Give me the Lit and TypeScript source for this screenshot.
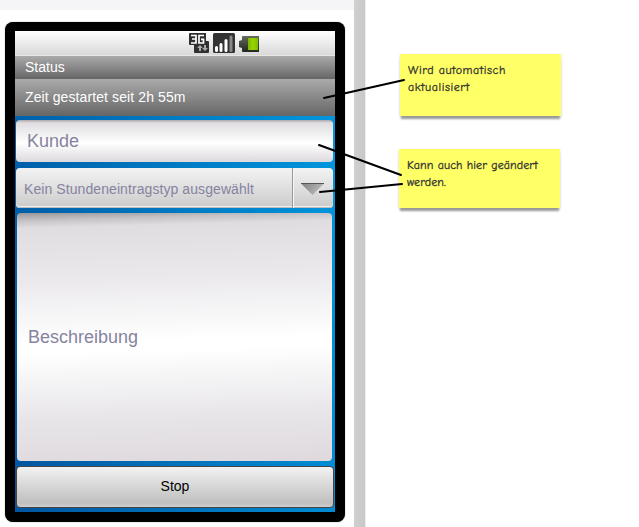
import { LitElement, html, css, svg } from "lit";
import { customElement } from "lit/decorators.js";

@customElement("status-icons")
class StatusIcons extends LitElement {
  static styles = css`
    :host { display: block; width: 74px; height: 22px; }
    svg { display: block; }
  `;
  render() {
    return html`<svg width="74" height="22" viewBox="0 0 74 22">
      <defs>
        <linearGradient id="cell" x1="0" x2="1"><stop offset="0" stop-color="#78b800"/><stop offset=".5" stop-color="#99d500"/><stop offset="1" stop-color="#7cba00"/></linearGradient>
        <linearGradient id="dark" y2="1" x2="0"><stop offset="0" stop-color="#66695f"/><stop offset="1" stop-color="#22251d"/></linearGradient>
      </defs>
      <path d="M2 2h16v8h2q1 0 1 1v10q0 1-1 1H7q-1 0-1-1v-7H2q-1 0-1-1V3q0-1 1-1z" fill="#303030"/>
      <path d="M3 4.500h5V12H3M4 8h4M16 4.500h-5V12h4.500V8.300h-2.500" fill="none" stroke="#fff" stroke-width="1.700"/>
      <path d="M12 14l3 3h-2v3h-2v-3H9zM17 20l-3-3h2v-3h2v3h2z" fill="#aaa"/>
      <rect x="25" y="2" width="22" height="20" rx="1.500" fill="#333"/>
      <path d="M28.500 19.500v-3M33 19.500v-6M38 19.500v-10" stroke="#fff" stroke-width="3" stroke-linecap="round"/>
      <path d="M43 19.500V6" stroke="#888" stroke-width="3" stroke-linecap="round"/>
      <path d="M55 5h16v16H55q-1 0-1-1v-3l-3-1V10l3-1V6q0-1 1-1z" fill="url(#dark)"/>
      <rect x="60" y="7" width="10" height="12" fill="url(#cell)"/>
    </svg>`;
  }
}

@customElement("sticky-note")
class StickyNote extends LitElement {
  static styles = css`
    :host {
      display: block; box-sizing: border-box; padding: 8px;
      background: #ffff66; color: #333; -webkit-text-stroke: 0.3px #333;
      box-shadow: 0 4px 2px -1px #999, 0 1px 3px #ddd;
      font: 12px/17px "Comic Sans MS", "Comic Neue", "Noto Sans", sans-serif;
    }
  `;
  render() { return html`<slot></slot>`; }
}

@customElement("app-root")
class AppRoot extends LitElement {
  static styles = css`
    :host {
      display: block; position: relative; width: 639px; height: 527px; overflow: hidden;
      background: #fff; font-family: "Liberation Sans", Arial, sans-serif;
    }
    .page { display: flex; height: 527px; }
    .sheet { box-sizing: border-box; width: 354px; border-top: 10px solid #f5f5f8; padding: 12px 0 0 5px; }
    .rail { width: 11px; background: linear-gradient(90deg, #d0d0d0, #c8c8c8); border-right: 1px solid #eee; }
    .phone {
      box-sizing: border-box; width: 340px; height: 500px; border-radius: 8px; background: #000;
      padding: 9px 10px 10px; box-shadow: 0 0 1px #555;
    }
    .screen { height: 481px; display: flex; flex-direction: column; background: linear-gradient(80deg, #0055a0, #0099e0); }
    .bar { height: 25px; box-sizing: border-box; padding-left: 173px; background: linear-gradient(#fff, #d9d9d9 94%, #eee); }
    .strip { color: #fff; font-size: 14px; padding-left: 10px; background: linear-gradient(#aaa, #666); }
    .status { height: 23px; line-height: 23px; }
    .timer { height: 37px; line-height: 36px; letter-spacing: 0.1px; }
    .form { display: flex; flex-direction: column; padding: 4px 2px 0 1px; }
    .field { color: #8683a0; box-sizing: border-box; border-radius: 4px; }
    .customer {
      height: 42px; line-height: 42px; padding-left: 11px; font-size: 18px;
      background: linear-gradient(#aaa8aa, #dfdde0 7%, #fff 55%, #ddd9dd);
    }
    .type { height: 40px; margin-top: 6px; display: flex; font-size: 14px; line-height: 42px;
      background: linear-gradient(#f3f3f3, #cbcbcb); box-shadow: inset 0 -1px #bbb, inset 0 -2px #eee; }
    .label { width: 277px; box-sizing: border-box; padding-left: 8px; border-right: 1px solid #999; letter-spacing: 0.08px; white-space: nowrap; }
    .arrow { flex: 1; border-left: 1px solid #f5f5f5; padding: 15px 0 0 7px; }
    .arrow svg { display: block; }
    .description {
      height: 248px; line-height: 248px; margin: 5px 1px 0; padding-left: 11px; font-size: 18px;
      background: linear-gradient(178.500deg, #99969a, #c4c2c5 3%, #dfdde0 6%, #ebe9ec 27%, #fff 51%, #fff 55%, #e8e6e9 80%, #dfd9dd);
    }
    .stop {
      height: 42px; margin: 5px -1px 0 0; box-sizing: border-box; border: 1px solid #454545; border-radius: 4px;
      font: 14px "Liberation Sans", Arial, sans-serif; color: #000; padding: 0 0 2px;
      background: linear-gradient(#f2f2f2, #bfbfbf 90%, #cfcfcf);
    }
    .note { position: absolute; }
    .auto { left: 400px; top: 54px; width: 161px; height: 62px; letter-spacing: 0.55px; }
    .edit { left: 399px; top: 149px; width: 161px; height: 59px; letter-spacing: 0.1px; }
    .lines { position: absolute; left: 0; top: 0; }
  `;
  render() {
    return html`
      <div class="page">
        <div class="sheet">
          <div class="phone"><div class="screen">
            <div class="bar"><status-icons></status-icons></div>
            <div class="strip status">Status</div>
            <div class="strip timer">Zeit gestartet seit 2h 55m</div>
            <div class="form">
              <div class="field customer">Kunde</div>
              <div class="field type">
                <div class="label">Kein Stundeneintragstyp ausgewählt</div>
                <div class="arrow"><svg width="24" height="13" viewBox="0 0 24 13">
                  <defs><linearGradient id="tri" x2="1" y2=".4"><stop offset="0" stop-color="#808080"/><stop offset="1" stop-color="#bbb"/></linearGradient></defs>
                  <path d="M0 .500h23L11.500 12z" fill="url(#tri)"/><path d="M0 .500h23" stroke="#555"/>
                </svg></div>
              </div>
              <div class="field description">Beschreibung</div>
              <button class="stop">Stop</button>
            </div>
          </div></div>
        </div>
        <div class="rail"></div>
      </div>
      <sticky-note class="note auto">Wird automatisch<br>aktualisiert</sticky-note>
      <sticky-note class="note edit">Kann auch hier geändert<br>werden.</sticky-note>
      <svg class="lines" width="639" height="527" fill="none" stroke="#000" stroke-width="2" stroke-linecap="round">
        ${[[324, 98, 404, 80], [319, 145, 401, 175], [320, 192, 402, 184]].map(
          ([a, b, c, d]) => svg`<line x1=${a} y1=${b} x2=${c} y2=${d}></line>`)}
      </svg>`;
  }
}
